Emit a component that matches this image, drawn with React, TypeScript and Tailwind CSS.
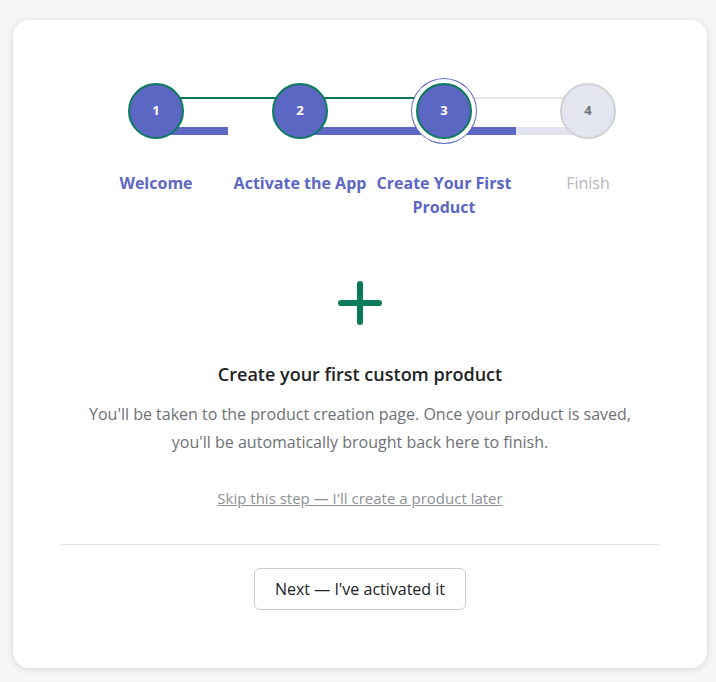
const steps = [
  { n: 1, label: "Welcome", state: "done" },
  { n: 2, label: "Activate the App", state: "done" },
  { n: 3, label: "Create Your First Product", state: "current" },
  { n: 4, label: "Finish", state: "todo" },
];

const circleCols = ["col-start-1 col-span-2", "col-start-3 col-span-2", "col-start-5 col-span-2", "col-start-7 col-span-2"];

function Circle({ n, state, col }: { n: number; state: string; col: string }) {
  const active = state !== "todo";
  return (
    <div
      className={`${col} row-start-1 relative z-10 flex h-14 w-14 items-center justify-center justify-self-center rounded-full border-2 text-[13px] font-bold ${
        active ? "border-[#0b7a5c] bg-[#5c67c4] text-white" : "border-[#d0d2d6] bg-[#e3e6ef] text-[#6d7175]"
      } ${state === "current" ? "shadow-[0_0_0_4px_#fff,0_0_0_5px_#5c67c4]" : ""}`}
    >
      {n}
    </div>
  );
}

function Stepper() {
  return (
    <div className="ml-[23px] w-[576px]">
      <div className="grid h-14 grid-cols-[repeat(8,72px)] grid-rows-1">
        {/* thin connectors along the top */}
        <div className="col-start-2 col-span-2 row-start-1 mt-[14px] h-[2px] self-start bg-[#0b7a5c]" />
        <div className="col-start-4 col-span-2 row-start-1 mt-[14px] h-[2px] self-start bg-[#0b7a5c]" />
        <div className="col-start-6 col-span-2 row-start-1 mt-[14px] h-[2px] self-start bg-[#e4e5e7]" />
        {/* progress bars */}
        <div className="col-start-2 col-span-1 row-start-1 mt-11 h-2 self-start bg-[#5c67c4]" />
        <div className="col-start-4 col-span-3 row-start-1 mt-11 h-2 self-start bg-[#5c67c4]" />
        <div className="col-start-7 col-span-1 row-start-1 mt-11 h-2 self-start bg-[#e1e4f0]" />
        {steps.map((s, i) => (
          <Circle key={s.n} n={s.n} state={s.state} col={circleCols[i]} />
        ))}
      </div>
      <div className="mt-8 grid grid-cols-4">
        {steps.map((s) => (
          <div
            key={s.n}
            className={`px-1 text-center text-base leading-6 ${
              s.state !== "todo" ? "font-bold text-[#5c67c4]" : "text-[#b3b6bc]"
            }`}
          >
            {s.label}
          </div>
        ))}
      </div>
    </div>
  );
}

export default function App() {
  return (
    <div className="min-h-[682px] bg-[#f4f5f7] pt-5 pr-[9px] pb-[14px] pl-[13px] font-['Open_Sans',sans-serif]">
      <div className="rounded-2xl bg-white px-12 pt-[63px] pb-[58px] shadow-[0_1px_6px_rgba(0,0,0,0.12)]">
        <Stepper />

        <div className="mt-[62px] flex justify-center">
          <svg width="44" height="44" viewBox="0 0 44 44" fill="none" stroke="#0b7a5c" strokeWidth="6" strokeLinecap="round">
            <path d="M22 3v38M3 22h38" />
          </svg>
        </div>

        <h2 className="mt-[35px] text-center text-lg leading-7 font-semibold text-[#202223]">Create your first custom product</h2>
        <p className="mt-3 text-center text-base leading-7 text-[#6d7175]">
          You'll be taken to the product creation page. Once your product is saved,
          <br />
          you'll be automatically brought back here to finish.
        </p>

        <div className="mt-[30px] text-center">
          <a href="#" className="text-[15px] leading-5 text-[#8c9196] underline">
            Skip this step — I'll create a product later
          </a>
        </div>

        <div className="mt-[34px] border-t border-[#e1e3e5]" />

        <div className="mt-[23px] flex justify-center">
          <button className="h-[42px] w-[212px] rounded-md border border-[#c9cccf] bg-white text-base text-[#202223]">
            Next — I've activated it
          </button>
        </div>
      </div>
    </div>
  );
}
